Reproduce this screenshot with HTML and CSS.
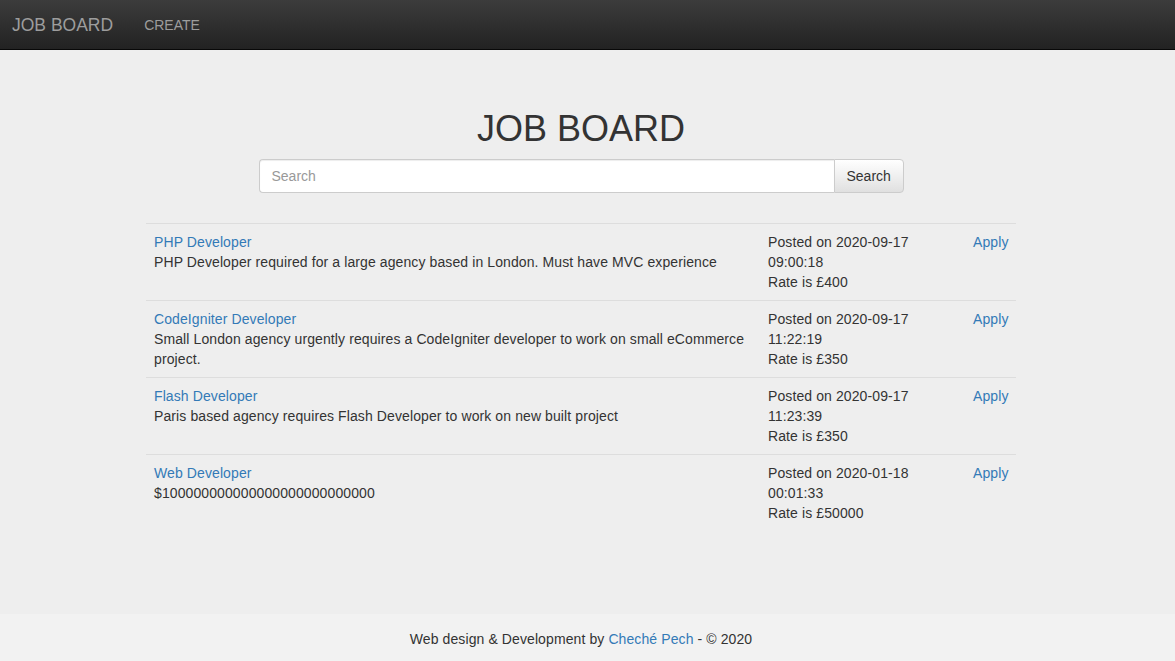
FILE: index.html
```html
<!DOCTYPE html>
<html>
<head>
<meta charset="utf-8">
<title>Job Board</title>
<link rel="stylesheet" href="styles.css">
</head>
<body>
<nav class="navbar">
  <a class="brand" href="#">JOB BOARD</a>
  <a class="nav-link" href="#">CREATE</a>
</nav>
<main class="main">
  <div class="container">
    <h1 class="title">JOB BOARD</h1>
    <form class="search">
      <input class="search-input" type="text" placeholder="Search">
      <button class="search-btn" type="button">Search</button>
    </form>
    <table class="jobs">
      <tr>
        <td class="c-main"><a href="#">PHP Developer</a><br>PHP Developer required for a large agency based in London. Must have MVC experience</td>
        <td class="c-meta">Posted on 2020-09-17 09:00:18<br>Rate is £400</td>
        <td class="c-act"><a href="#">Apply</a></td>
      </tr>
      <tr>
        <td class="c-main"><a href="#">CodeIgniter Developer</a><br>Small London agency urgently requires a CodeIgniter developer to work on small eCommerce project.</td>
        <td class="c-meta">Posted on 2020-09-17 11:22:19<br>Rate is £350</td>
        <td class="c-act"><a href="#">Apply</a></td>
      </tr>
      <tr>
        <td class="c-main"><a href="#">Flash Developer</a><br>Paris based agency requires Flash Developer to work on new built project</td>
        <td class="c-meta">Posted on 2020-09-17 11:23:39<br>Rate is £350</td>
        <td class="c-act"><a href="#">Apply</a></td>
      </tr>
      <tr>
        <td class="c-main"><a href="#">Web Developer</a><br>$100000000000000000000000000</td>
        <td class="c-meta">Posted on 2020-01-18 00:01:33<br>Rate is £50000</td>
        <td class="c-act"><a href="#">Apply</a></td>
      </tr>
    </table>
  </div>
</main>
<footer class="footer">
  <p class="footer-text">Web design &amp; Development by <a href="#">Cheché Pech</a> - © 2020</p>
</footer>
</body>
</html>
```
FILE: styles.css
```css
* { box-sizing: border-box; }
html, body { height: 100%; }
body {
  margin: 0;
  font-family: "Liberation Sans", Arial, sans-serif;
  font-size: 14px;
  line-height: 20px;
  letter-spacing: 0.1px;
  color: #333;
  background: #eee;
  display: flex;
  flex-direction: column;
}
a { color: #337ab7; text-decoration: none; }

.navbar {
  height: 50px;
  flex: 0 0 50px;
  background: linear-gradient(#3c3c3c, #222);
  border-bottom: 1px solid #080808;
  display: flex;
  align-items: center;
  padding-left: 12px;
}
.brand {
  color: #9d9d9d;
  font-size: 17.5px;
  line-height: 20px;
  letter-spacing: 0;
  margin-right: 31px;
}
.nav-link {
  color: #9d9d9d;
  font-size: 14px;
  line-height: 20px;
  letter-spacing: 0;
}

.main {
  flex: 1 0 auto;
  padding-right: 13px;
}
.container {
  width: 870px;
  margin: 0 auto;
}
.title {
  margin: 57px 0 9px;
  font-size: 36px;
  font-weight: 400;
  line-height: 1.2;
  letter-spacing: 0;
  text-align: center;
  color: #333;
}
.search {
  display: flex;
  width: 645px;
  margin: 0 auto 30px;
  height: 34px;
}
.search-input {
  flex: 1;
  height: 34px;
  padding: 6px 12px;
  font-family: inherit;
  font-size: 14px;
  color: #555;
  background: #fff;
  border: 1px solid #ccc;
  border-right: 0;
  border-radius: 4px 0 0 4px;
  box-shadow: inset 0 1px 1px rgba(0,0,0,.075);
  outline: none;
}
.search-input::placeholder { color: #999; }
.search-btn {
  width: 70px;
  height: 34px;
  font-family: inherit;
  font-size: 14px;
  color: #333;
  background: linear-gradient(#fff, #e0e0e0);
  border: 1px solid #ccc;
  border-radius: 0 4px 4px 0;
  padding: 6px 12px;
}

.jobs {
  width: 870px;
  border-collapse: collapse;
  table-layout: fixed;
}
.jobs td {
  padding: 8px;
  vertical-align: top;
  border-top: 1px solid #ddd;
  line-height: 20px;
}
.c-main { width: 614px; }
.c-meta { width: 205px; }
.c-act { width: 51px; }

.footer {
  flex: 0 0 auto;
  background: #f2f2f2;
  margin-top: 82px;
  padding: 15px 13px 12px 0;
}
.footer-text {
  margin: 0;
  text-align: center;
}
```
